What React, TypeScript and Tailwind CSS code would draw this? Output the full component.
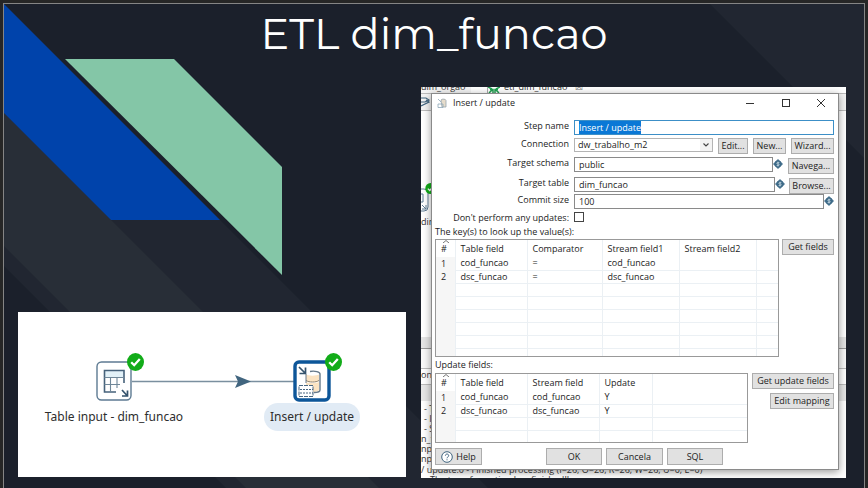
import { useEffect, useRef } from "react";
import type { ReactNode } from "react";

const BUTTON =
  "flex items-center justify-center whitespace-nowrap border border-[#adadad] bg-[#e1e1e1] text-[9px] leading-3 text-[#1c1c1c]";
const INPUT =
  "h-[15px] min-w-0 flex-1 rounded-none border border-[#8a8a8a] bg-white px-1 text-[9px] leading-3 text-[#1c1c1c] outline-none";
const LABEL = "w-[134px] shrink-0 text-right leading-3";

function Backdrop() {
  return (
    <svg
      className="absolute inset-0 h-full w-full"
      viewBox="0 0 868 488"
      preserveAspectRatio="xMinYMin slice"
      aria-hidden="true"
    >
      <rect width="868" height="488" fill="#262626" />
      <rect x="3" y="3" width="862" height="490" fill="#858585" />
      <rect x="4" y="4" width="860" height="490" fill="#1b202b" />
      <polygon points="4,4 488,488 226,488 4,266" fill="#212631" />
      <polygon points="4,113 379,488 246,488 4,246" fill="#282e37" />
      <polygon points="710,4 864,4 864,158" fill="#212631" />
      <polygon points="4,4 220,220 111,220 4,113" fill="#0043ab" />
      <polygon points="65,59 174,59 282,167 282,275" fill="#84c6a7" />
    </svg>
  );
}

function CheckBadge({ className }: { className: string }) {
  return (
    <svg className={className} viewBox="0 0 17 18" aria-hidden="true">
      <ellipse cx="8.5" cy="9" rx="8.5" ry="9" fill="#12ac19" />
      <path d="M4.2 9.2l3 3 5.6-6.2" fill="none" stroke="#fff" strokeWidth="2.3" />
    </svg>
  );
}

function TableInputIcon() {
  return (
    <svg className="h-10 w-9" viewBox="0 0 36 40" fill="none" aria-hidden="true">
      <rect x="1" y="1" width="34" height="38" rx="4.5" fill="#fff" stroke="#5d7a92" strokeWidth="1.4" />
      <rect x="8.5" y="9.5" width="19" height="7" fill="#e2f1f8" />
      <path d="M28 22V9.5H8.5V31H20" stroke="#46627b" strokeWidth="1.6" />
      <path d="M8.5 16.5H28M8.5 23.5H24M14.5 16.5V31M21 16.5V27" stroke="#6f8799" strokeWidth="1.1" />
      <path d="M26 29l5 5.5M31.5 29.5V35H26" stroke="#35536d" strokeWidth="1.7" />
    </svg>
  );
}

function InsertUpdateIcon() {
  return (
    <svg className="h-[42px] w-[38px]" viewBox="0 0 38 42" fill="none" aria-hidden="true">
      <rect x="2" y="2" width="34" height="38" rx="4" fill="#fff" stroke="#0d5699" strokeWidth="3.4" />
      <path d="M13 14.5c3 1.5 10 1.5 13 0v6c-3 1.5-10 1.5-13 0zM13 22c3 1.5 10 1.5 13 0v8c-1 1.5-3 2-6 2v-7h-7z" fill="#fbe3c2" />
      <path d="M13 20.5c3 2 10 2 13 0" stroke="#8f7f68" />
      <path d="M17 11.5c5-1 10 .5 10 2.5v16c0 1.5-2 2.5-6 2.5" stroke="#66798a" strokeWidth="1.4" />
      <path d="M13 14v9" stroke="#66798a" />
      <rect x="6" y="25.5" width="14" height="11" fill="#fff" stroke="#4a6781" strokeDasharray="4 1" />
      <path d="M7 29.5h13M7 33h13" stroke="#4a6781" strokeDasharray="2 1" />
      <path d="M6 7l6 6M12.5 7.5V13.5H6.5" stroke="#35536d" strokeWidth="1.7" />
    </svg>
  );
}

function FlowDiagram() {
  return (
    <section
      aria-label="Transformation"
      className="relative h-[165px] overflow-hidden bg-white font-['Noto_Sans','Open_Sans',sans-serif] text-[12px] leading-4 text-[#2e2e2e]"
    >
      <svg className="absolute left-[114px] top-[62px] h-4 w-[164px]" viewBox="0 0 164 16" aria-hidden="true">
        <path d="M0 7.5H164" stroke="#7a8f9f" strokeWidth="1.6" />
        <path d="M103 1l16 6.5-16 6.5 3-6.5z" fill="#41657f" />
      </svg>
      <div className="absolute left-[16px] top-[49px] flex w-[160px] flex-col items-center gap-2">
        <TableInputIcon />
        <CheckBadge className="absolute left-[93px] top-[-8px] h-[18px] w-[17px]" />
        <span className="whitespace-nowrap">Table input - dim_funcao</span>
      </div>
      <div className="absolute left-[246px] top-[48px] flex w-[96px] flex-col items-center gap-px">
        <InsertUpdateIcon />
        <CheckBadge className="absolute left-[61px] top-[-7px] h-[18px] w-[17px]" />
        <span className="flex h-7 w-full items-center justify-center whitespace-nowrap rounded-full bg-[#e1ebf5]">
          Insert / update
        </span>
      </div>
    </section>
  );
}

function VariableIcon() {
  return (
    <svg className="h-[10px] w-[10px] shrink-0" viewBox="0 0 10 10" aria-hidden="true">
      <path d="M5 0l5 5-5 5-5-5z" fill="#4a7590" />
      <circle cx="5" cy="5" r="3.4" fill="#3e6a88" />
      <path d="M6.4 3.6H4.5c-1 0-1 1.4 0 1.4h1c1 0 1 1.5 0 1.5H3.6M5 2.6v5" fill="none" stroke="#cfe0ea" strokeWidth=".7" />
    </svg>
  );
}

function Field({
  id,
  label,
  rowClass,
  children,
}: {
  id: string;
  label: string;
  rowClass: string;
  children: ReactNode;
}) {
  return (
    <div className={`flex items-start gap-[5px] ${rowClass}`}>
      <label htmlFor={id} className={LABEL}>
        {label}
      </label>
      <div className="flex min-w-0 flex-1 items-start">{children}</div>
    </div>
  );
}

function DataTable({
  headers,
  rows,
  blank,
  widths,
}: {
  headers: string[];
  rows: string[][];
  blank: number;
  widths: string[];
}) {
  const all = [...rows, ...Array.from({ length: blank }, () => headers.map(() => ""))];
  return (
    <table className="h-full w-full table-fixed border-collapse text-left">
      <colgroup>
        {widths.map((w, i) => (
          <col key={i} className={w} />
        ))}
      </colgroup>
      <thead>
        <tr className="h-[17px]">
          {headers.map((h, i) => (
            <th
              key={i}
              className={
                i === 0
                  ? "relative p-0 pl-[5px] font-normal leading-3"
                  : "border-l border-[#ebf0f4] p-0 pl-[5px] font-normal leading-3"
              }
            >
              {i === 0 && (
                <svg className="absolute left-[7px] top-0 h-[3px] w-[6px]" viewBox="0 0 6 3" aria-hidden="true">
                  <path d="M0 3l3-2.5L6 3" fill="none" stroke="#777" />
                </svg>
              )}
              {h}
            </th>
          ))}
        </tr>
      </thead>
      <tbody>
        {all.map((row, r) => (
          <tr key={r} className={r === all.length - 1 ? "" : "h-[13px]"}>
            {row.map((c, i) => (
              <td
                key={i}
                className={
                  i === 0
                    ? "bg-[#f6f6f6] p-0 pl-[5px] leading-3"
                    : r === all.length - 1
                      ? "border-l border-[#ebf0f4] p-0 pl-[5px] leading-3"
                      : "border-b border-l border-[#ebf0f4] p-0 pl-[5px] leading-3"
                }
              >
                {c}
              </td>
            ))}
          </tr>
        ))}
      </tbody>
    </table>
  );
}

function Dialog() {
  const stepName = useRef<HTMLInputElement>(null);

  useEffect(() => {
    stepName.current?.focus();
    stepName.current?.select();
  }, []);

  return (
    <div
      role="dialog"
      aria-label="Insert / update"
      className="absolute bottom-[8px] left-[10px] right-[7px] top-[6px] flex flex-col border border-[#8a8a8a] bg-white pl-[3px] pr-1 text-[9px] leading-3 text-[#1c1c1c] shadow-[0_2px_8px_rgba(0,0,0,0.4)]"
    >
      <header className="flex h-[26px] shrink-0 items-start pl-[2px] pr-[8px] pt-[3px]">
        <svg className="mt-px h-[10px] w-[10px]" viewBox="0 0 10 10" fill="none" aria-hidden="true">
          <path d="M4 2c1-1.5 5-1 5 .5V9H5z" fill="#e6dccb" stroke="#98a5ae" strokeWidth=".8" />
          <path d="M1 1l3 3M1 6h5v3.5H1z" stroke="#8ea7b8" strokeWidth=".8" />
        </svg>
        <h2 className="ml-[6px] flex-1">Insert / update</h2>
        <div className="flex gap-[25px]">
          <button type="button" aria-label="Minimize" className="flex h-3 w-[10px] items-center">
            <span className="h-px w-2 bg-[#333]" />
          </button>
          <button type="button" aria-label="Maximize" className="flex h-3 w-[10px] items-center justify-center">
            <span className="h-2 w-2 border border-[#333]" />
          </button>
          <button type="button" aria-label="Close" className="flex h-3 w-[10px] items-center justify-center">
            <svg className="h-2 w-2" viewBox="0 0 8 8" aria-hidden="true">
              <path d="M0 0l8 8M8 0L0 8" stroke="#333" />
            </svg>
          </button>
        </div>
      </header>

      <Field id="step" label="Step name" rowClass="h-[18px]">
        <input
          id="step"
          ref={stepName}
          defaultValue="Insert / update"
          className="h-[15px] min-w-0 flex-1 rounded-none border border-[#3c8fc7] bg-white px-1 text-[9px] leading-3 outline-none selection:bg-[#0a78d6] selection:text-white"
        />
      </Field>
      <Field id="connection" label="Connection" rowClass="h-[19px]">
        <div className="relative mr-[5px] flex min-w-0 flex-1">
          <select
            id="connection"
            className="h-[14px] w-full appearance-none rounded-none border border-[#b4b4b4] bg-white px-[3px] text-[9px] leading-3"
          >
            <option>dw_trabalho_m2</option>
          </select>
          <span className="pointer-events-none absolute inset-y-px right-px flex w-3 items-center justify-center bg-[#f3f3f3]">
            <svg className="h-1 w-[6px]" viewBox="0 0 6 4" aria-hidden="true">
              <path d="M.5.5L3 3 5.5.5" fill="none" stroke="#444" strokeWidth="1.1" />
            </svg>
          </span>
        </div>
        <div className="flex gap-[5px]">
          <button type="button" className={`${BUTTON} h-4 w-[30px]`}>Edit...</button>
          <button type="button" className={`${BUTTON} h-4 w-[33px]`}>New...</button>
          <button type="button" className={`${BUTTON} h-4 w-[43px]`}>Wizard...</button>
        </div>
      </Field>
      <Field id="schema" label="Target schema" rowClass="h-5">
        <input id="schema" defaultValue="public" className={INPUT} />
        <div className="mr-[5px] mt-[2px]">
          <VariableIcon />
        </div>
        <button type="button" className={`${BUTTON} mt-px h-4 w-[46px]`}>Navega...</button>
      </Field>
      <Field id="table" label="Target table" rowClass="h-[17px]">
        <input id="table" defaultValue="dim_funcao" className={INPUT} />
        <div className="mr-[4px] mt-[2px]">
          <VariableIcon />
        </div>
        <button type="button" className={`${BUTTON} mt-px h-4 w-[45px]`}>Browse...</button>
      </Field>
      <Field id="commit" label="Commit size" rowClass="h-[18px]">
        <input id="commit" defaultValue="100" className={INPUT} />
        <div className="mt-[2px]">
          <VariableIcon />
        </div>
      </Field>
      <Field id="skip" label="Don't perform any updates:" rowClass="h-[14px]">
        <input id="skip" type="checkbox" className="h-[10px] w-[10px] appearance-none border border-[#444] bg-white" />
      </Field>

      <h3 className="h-[13px] shrink-0">The key(s) to look up the value(s):</h3>
      <div className="flex items-start gap-[3px]">
        <div className="h-[118px] min-w-0 flex-1 border border-[#999]">
          <DataTable
            headers={["#", "Table field", "Comparator", "Stream field1", "Stream field2", ""]}
            rows={[
              ["1", "cod_funcao", "=", "cod_funcao", "", ""],
              ["2", "dsc_funcao", "=", "dsc_funcao", "", ""],
            ]}
            blank={6}
            widths={["w-[19px]", "w-[72px]", "w-[75px]", "w-[77px]", "w-[77px]", ""]}
          />
        </div>
        <button type="button" className={`${BUTTON} h-4 w-[52px]`}>Get fields</button>
      </div>

      <h3 className="mt-[2px] h-[14px] shrink-0">Update fields:</h3>
      <div className="flex items-start gap-[4px]">
        <div className="h-[70px] min-w-0 flex-1 border border-[#999]">
          <DataTable
            headers={["#", "Table field", "Stream field", "Update", ""]}
            rows={[
              ["1", "cod_funcao", "cod_funcao", "Y", ""],
              ["2", "dsc_funcao", "dsc_funcao", "Y", ""],
            ]}
            blank={2}
            widths={["w-[19px]", "w-[72px]", "w-[72px]", "w-[53px]", ""]}
          />
        </div>
        <div className="flex flex-col items-end gap-1">
          <button type="button" className={`${BUTTON} h-4 w-[82px]`}>Get update fields</button>
          <button type="button" className={`${BUTTON} h-4 w-[64px]`}>Edit mapping</button>
        </div>
      </div>

      <footer className="mt-[5px] flex gap-[4px]">
        <button type="button" className={`${BUTTON} h-[17px] w-[47px] gap-[3px]`}>
          <svg className="h-3 w-3" viewBox="0 0 12 12" fill="none" aria-hidden="true">
            <circle cx="6" cy="6" r="5.3" fill="#fff" stroke="#41657f" />
            <path d="M4.4 4.7c0-2.2 3.3-2.2 3.3 0C7.7 6 6 5.9 6 7.3M6 8.3v1" stroke="#41657f" />
          </svg>
          Help
        </button>
        <button type="button" className={`${BUTTON} ml-[60px] h-[17px] w-[56px]`}>OK</button>
        <button type="button" className={`${BUTTON} h-[17px] w-[57px]`}>Cancela</button>
        <button type="button" className={`${BUTTON} h-[17px] w-[56px]`}>SQL</button>
      </footer>
    </div>
  );
}

function Workbench() {
  return (
    <section
      aria-label="Step settings"
      className="relative h-[391px] overflow-hidden bg-white font-['Open_Sans','Noto_Sans',sans-serif] text-[9px] leading-3 text-[#333]"
    >
      <div className="flex h-[6px] items-end overflow-hidden">
        <span className="w-[50px] whitespace-nowrap bg-[#f4f4f4]">dim_orgao</span>
        <span className="ml-4 flex h-3 items-center gap-1 border-l border-[#aaa]">
          <svg className="h-3 w-3" viewBox="0 0 12 12" aria-hidden="true">
            <path d="M0 6l4 2M12 6L8 8M1 12l3-3M11 12L8 9M2 8.5h3V12M10 8.5H7V12" fill="none" stroke="#20a050" strokeWidth="1.5" />
          </svg>
          etl_dim_funcao
          <span className="ml-1 text-[#777]">&#9746;</span>
        </span>
      </div>
      <div className="h-[18px] border-y border-[#bbb] bg-[#f3f3f3]">
        <svg className="h-4 w-[9px]" viewBox="0 0 9 16" fill="none" aria-hidden="true">
          <path d="M0 4h5l3 2-4 2H0M0 12l8-4-3-2" stroke="#41657f" strokeWidth="1.2" />
        </svg>
      </div>
      <div className="h-[226px] pt-[71px]">
        <div className="flex h-[34px] items-start pt-[6px]">
          <svg className="h-6 w-2" viewBox="0 0 8 24" fill="none" aria-hidden="true">
            <path d="M0 1h3q4 0 4 4v14q0 4-4 4H0M0 6h2v8H0M1 17l4 4M5 17v4H1" stroke="#5d7a92" />
          </svg>
        </div>
        <CheckBadge className="absolute left-1 top-[96px] h-[11px] w-[11px]" />
        <span className="block">dim</span>
      </div>
      <div className="h-[12px] border-b border-[#999] bg-[#e4e4e4]" />
      <div className="h-[20px] border-b border-[#bbb] bg-[#f8f8f8]" />
      <div className="h-[15px]">on</div>
      <div className="h-[17px] border-t border-[#bbb] bg-[#e6e6e6]" />
      <div className="whitespace-pre pt-[3px] leading-[10px]">
        <p className="pl-[3px]">- T</p>
        <p className="pl-[3px]">- I</p>
        <p className="pl-[3px]">- S</p>
        <p>n_f</p>
        <p>np</p>
        <p>np</p>
        <p className="pt-px">/ update.0 - Finished processing (I=26, O=26, R=26, W=26, U=0, E=0)</p>
        <p className="pl-[9px]">The transformation has finished!!</p>
      </div>
      <Dialog />
    </section>
  );
}

export default function App() {
  return (
    <main className="relative min-h-screen overflow-hidden bg-[#262626]">
      <Backdrop />
      <div className="relative pt-1">
        <h1 className="h-[83px] pt-[2px] text-center font-['Montserrat','Inter',sans-serif] text-[43px] font-normal leading-[56px] text-white">
          ETL dim_funcao
        </h1>
        <div className="grid grid-cols-[388fr_425fr] items-end gap-[15px] pb-[10px] pl-[18px] pr-[22px]">
          <div className="pb-px">
            <FlowDiagram />
          </div>
          <Workbench />
        </div>
      </div>
    </main>
  );
}
